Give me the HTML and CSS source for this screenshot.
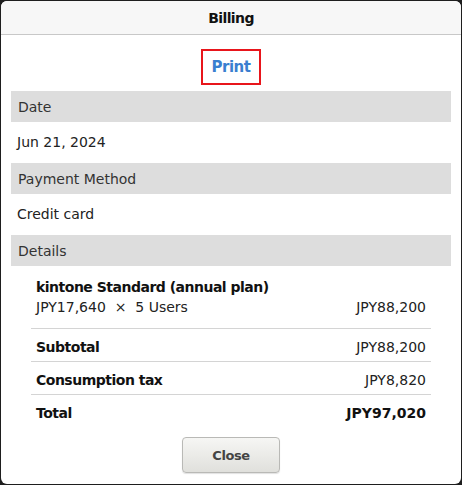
FILE: index.html
```html
<!DOCTYPE html>
<html>
<head>
<meta charset="utf-8">
<link rel="stylesheet" href="styles.css">
</head>
<body>
<div class="dialog">
  <div class="titlebar">Billing</div>
  <div class="content">
    <div class="print-row"><a class="print" href="#">Print</a></div>
    <div class="sec-head">Date</div>
    <div class="sec-value">Jun 21, 2024</div>
    <div class="sec-head">Payment Method</div>
    <div class="sec-value">Credit card</div>
    <div class="sec-head">Details</div>
    <div class="details">
      <div class="item">
        <div class="item-name">kintone Standard (annual plan)</div>
        <div class="line">
          <span>JPY17,640 &nbsp;×&nbsp; 5 Users</span>
          <span>JPY88,200</span>
        </div>
      </div>
      <div class="line row bold-label">
        <span>Subtotal</span>
        <span class="amt">JPY88,200</span>
      </div>
      <div class="line row bold-label">
        <span>Consumption tax</span>
        <span class="amt">JPY8,820</span>
      </div>
      <div class="line row total">
        <span class="total-label">Total</span>
        <span>JPY97,020</span>
      </div>
    </div>
    <div class="footer"><button class="close">Close</button></div>
  </div>
</div>
</body>
</html>
```
FILE: styles.css
```css
html, body {
  margin: 0;
  padding: 0;
  background: #1e1e1e;
}
body {
  padding: 1px;
  font-family: "DejaVu Sans", "Noto Sans", sans-serif;
  color: #222;
}
.dialog {
  width: 460px;
  height: 483px;
  background: #fff;
  border-radius: 6px;
  overflow: hidden;
  display: flex;
  flex-direction: column;
}
.titlebar {
  height: 33px;
  line-height: 35px;
  background: #f7f7f7;
  border-bottom: 1px solid #c8c8c8;
  text-align: center;
  font-weight: bold;
  font-size: 14px;
  letter-spacing: -0.6px;
  color: #111;
}
.content {
  padding: 0 10px;
}
.print-row {
  display: flex;
  justify-content: center;
  padding-top: 14px;
  height: 42px;
  box-sizing: border-box;
}
.print {
  display: block;
  width: 56px;
  height: 32px;
  line-height: 32px;
  border: 2px solid #e8151b;
  text-align: center;
  color: #3a7fd0;
  font-weight: bold;
  font-size: 15px;
  letter-spacing: -0.5px;
  text-decoration: none;
}
.print-row + .sec-head { margin-top: 14px; }
.sec-head {
  height: 31px;
  line-height: 32px;
  background: #dddddd;
  padding-left: 7px;
  font-size: 14px;
  color: #333;
}
.sec-value {
  height: 41px;
  line-height: 41px;
  padding-left: 6px;
  font-size: 14px;
  color: #222;
}
.details {
  padding: 8px 20px 0 20px;
}
.item {
  padding: 3px 5px 11px 5px;
  border-bottom: 1px solid #d4d4d4;
}
.item-name {
  font-weight: bold;
  font-size: 14px;
  line-height: 20px;
  letter-spacing: -0.5px;
  color: #111;
}
.line {
  display: flex;
  justify-content: space-between;
  font-size: 14px;
  line-height: 20px;
  color: #222;
}
.row {
  height: 32px;
  box-sizing: content-box;
  padding: 0 5px;
  border-bottom: 1px solid #d4d4d4;
  align-items: flex-start;
}
.row span {
  padding-top: 8px;
}
.bold-label span:first-child,
.total-label {
  font-weight: bold;
  letter-spacing: -0.5px;
  color: #111;
}
.total {
  border-bottom: none;
  height: 36px;
  font-weight: bold;
  color: #111;
}
.footer {
  display: flex;
  justify-content: center;
  padding-top: 6px;
}
.close {
  width: 98px;
  height: 36px;
  border: 1px solid #b9b9b6;
  border-radius: 4px;
  background: linear-gradient(#f6f6f4, #e0e0dc);
  box-shadow: 0 1px 1px rgba(0,0,0,0.12);
  font-family: "DejaVu Sans", "Noto Sans", sans-serif;
  font-weight: bold;
  font-size: 13px;
  letter-spacing: -0.4px;
  color: #444;
}
```
